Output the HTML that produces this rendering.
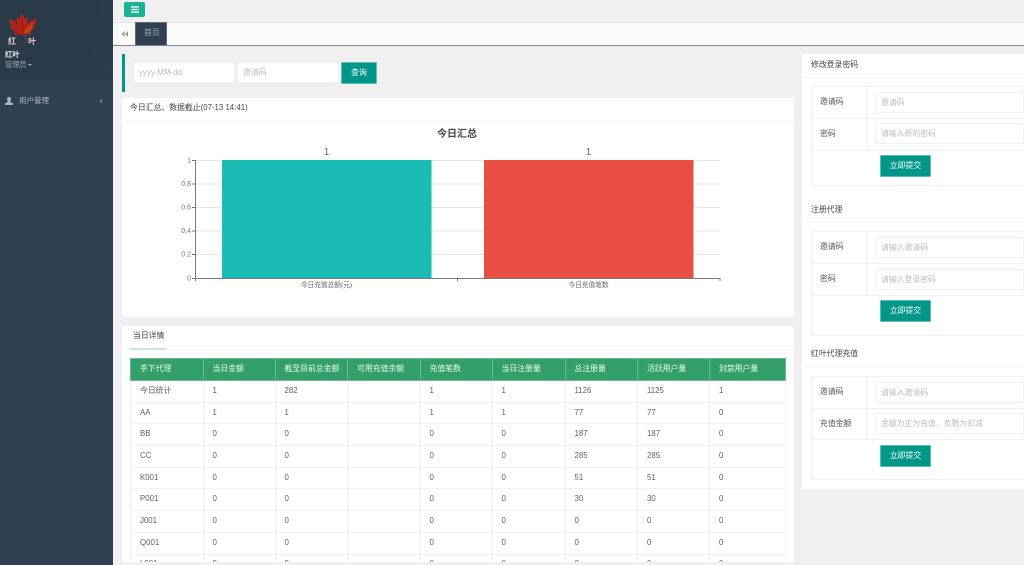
<!DOCTYPE html>
<html lang="zh"><head><meta charset="utf-8"><title>红叶</title>
<style>
*{box-sizing:border-box}
html,body{margin:0;padding:0;background:#f0f0f0}
body{width:1024px;height:565px;overflow:hidden;position:relative;font-family:"Liberation Sans","Noto Sans CJK SC",sans-serif;font-size:7.85px;color:#666}
#w{position:absolute;left:0;top:0;width:1024px;height:565px;overflow:hidden;filter:blur(.3px)}
.a{position:absolute}
.t{position:absolute;white-space:nowrap;line-height:12px}
.card{position:absolute;background:#fff}
.inp{position:absolute;background:#fff;border:1px solid #f1f1f1;color:#bbb;font-size:7.85px;line-height:19px;padding-left:5px;white-space:nowrap}
.btn{position:absolute;background:#009688;border:1px solid #5cbfb4;border-radius:1px;color:#fff;text-align:center;font-size:7.85px;white-space:nowrap}
.line{position:absolute;background:#f1f1f1}
table{position:absolute;left:130px;top:358px;width:655px;border-collapse:collapse;table-layout:fixed;font-size:7.85px}
th{background:#339f69;color:#eef8f2;font-weight:normal;text-align:left;height:22px;padding:0 0 2px 9px;border:1px solid #6cb98f}
td{height:21.7px;padding:0 0 2px 9px;border:1px solid #f1f1f1;color:#5f5f5f}
</style></head><body><div id="w">

<div class="a" style="left:0;top:0;width:113px;height:565px;background:#2f4050"></div>
<div class="a" style="left:0;top:0;width:113px;height:80px;background:linear-gradient(100deg,#2a3b4a 0%,#293a48 70%,#2b3c4b 100%)"></div>

<svg class="a" style="left:6px;top:12px" width="34" height="36" viewBox="0 0 34 36" font-family="'Liberation Sans','Noto Sans CJK SC',sans-serif">
<path d="M16 1L18.500 6.500L21.500 5.500L21 12.500L26 8L31 6.500L29 10.500L30 12L27 14.500L29 16L24 19.500L25 23L19 22L17 24L15 22L9 23.500L10 20L4 15.500L6 14L2.500 7.500L8 8.500L11.500 12.500L10.500 5.500L13.500 7Z" fill="#b8241a"/>
<path d="M19 15L27 10L25 19L18 22Z" fill="#c4401c"/>
<path d="M7 13L14 18L15 22L9 22Z" fill="#a81f18"/>
<path d="M16.500 6L17 22M17 17L24 12M17 17L9 12" stroke="#7a1c10" stroke-width=".6" fill="none"/>
<path d="M20 22L20 32" stroke="#5a4a3a" stroke-width="1"/>
<text x="2" y="32" font-size="8" font-weight="bold" fill="#e5c9c0">红</text>
<text x="22" y="32" font-size="8" font-weight="bold" fill="#e5c9c0">叶</text>
</svg>

<div class="t" style="left:5px;top:49px;color:#e4e8ec;font-weight:bold;font-size:7.3px">红叶</div>
<div class="t" style="left:5px;top:59px;color:#99a6b3;font-size:7.2px">管理员</div>
<div class="a" style="left:28px;top:64px;width:0;height:0;border:2px solid transparent;border-top-color:#a0acb6"></div>

<svg class="a" style="left:5px;top:97px" width="8" height="8" viewBox="0 0 8 8"><path d="M4 0C5.300 0 6 1 6 2.300C6 3.500 5.400 4.400 5 4.700L8 6.200V8H0V6.200L3 4.700C2.600 4.400 2 3.500 2 2.300C2 1 2.700 0 4 0Z" fill="#a7b1c2"/></svg>
<div class="t" style="left:19px;top:95px;color:#b3bccb;font-size:7.5px">用户管理</div>
<svg class="a" style="left:99px;top:98px" width="5" height="6" viewBox="0 0 5 6"><path d="M3 1.500L1.500 3L3 4.500" stroke="#a7b1c2" stroke-width=".8" fill="none"/></svg>

<div class="a" style="left:124px;top:2px;width:21px;height:15px;background:#1ab394;border-radius:2px"></div>
<svg class="a" style="left:131px;top:6px" width="8" height="7"><path d="M0 1H8M0 3.500H8M0 6H8" stroke="#fff" stroke-width="1.200"/></svg>

<div class="a" style="left:113px;top:22px;width:911px;height:24px;background:#fafafa;border-top:1px solid #e8e8e8;border-bottom:1px solid #7b8794"></div>
<svg class="a" style="left:121px;top:30px" width="8" height="8" viewBox="0 0 8 8"><path d="M3.500 1V7L0.500 4ZM7 1V7L4 4Z" fill="#9a9a9a"/></svg>
<div class="a" style="left:135px;top:22px;width:32px;height:23px;background:#2f4050;border:1px solid #5f6c78;border-bottom:0"></div>
<div class="t" style="left:144px;top:27px;color:#a7b1c2">首页</div>

<div class="a" style="left:122px;top:54px;width:3px;height:38px;background:#009688"></div>
<div class="inp" style="left:133px;top:62px;width:102px;height:21px">yyyy-MM-dd</div>
<div class="inp" style="left:237px;top:62px;width:102px;height:21px">邀请码</div>
<div class="btn" style="left:341px;top:62px;width:36px;height:22px;line-height:20px">查询</div>

<div class="card" style="left:122px;top:98px;width:672px;height:219px"></div>
<div class="line" style="left:122px;top:120px;width:672px;height:1px;background:#f5f5f5"></div>
<div class="t" style="left:130px;top:102px;color:#444">今日汇总、数据截止(07-13 14:41)</div>

<svg class="a" style="left:122px;top:120px" width="672" height="197" font-family="'Liberation Sans','Noto Sans CJK SC',sans-serif">
<g stroke="#e6e6e6" stroke-width="1"><path d="M73 40.500H598M73 64H598M73 87.500H598M73 111H598M73 134.500H598"/></g>
<rect x="100" y="40" width="209.500" height="118" fill="#1abcb3"/>
<rect x="362" y="40" width="209.500" height="118" fill="#e64f42"/>
<path d="M73.500 40V158.500H598M70 40.500H73M70 64H73M70 87.500H73M70 111H73M70 134.500H73M70 158.500H73M73.500 158V161M335.500 158V161M598 158V161" stroke="#777" stroke-width="1" fill="none"/>
<text x="335" y="17" text-anchor="middle" font-size="10" font-weight="bold" fill="#444">今日汇总</text>
<text x="204.500" y="35" text-anchor="middle" font-size="10" fill="#666">1</text>
<text x="466.500" y="35" text-anchor="middle" font-size="10" fill="#666">1</text>
<g font-size="7" fill="#777" text-anchor="end"><text x="69" y="42.500">1</text><text x="69" y="66">0.8</text><text x="69" y="89.500">0.6</text><text x="69" y="113">0.4</text><text x="69" y="136.500">0.2</text><text x="69" y="160.500">0</text></g>
<g font-size="6.700" fill="#666" text-anchor="middle"><text x="204.500" y="167">今日充值总额(元)</text><text x="466.500" y="167">今日充值笔数</text></g>
</svg>

<div class="card" style="left:122px;top:326px;width:672px;height:239px"></div>
<div class="line" style="left:122px;top:349px;width:672px;height:1px;background:#f5f5f5"></div>
<div class="a" style="left:130px;top:348px;width:36px;height:2px;background:#c5e8d3"></div>
<div class="t" style="left:133px;top:330px;color:#444">当日详情</div>

<table>
<colgroup><col style="width:72.500px"><col style="width:72px"><col style="width:72.500px"><col style="width:72.500px"><col style="width:72px"><col style="width:73px"><col style="width:72.500px"><col style="width:72px"><col style="width:76px"></colgroup>
<tr><th>手下代理</th><th>当日金额</th><th>截至目前总金额</th><th>可用充值余额</th><th>充值笔数</th><th>当日注册量</th><th>总注册量</th><th>活跃用户量</th><th>封禁用户量</th></tr>
<tr><td>今日统计</td><td>1</td><td>282</td><td></td><td>1</td><td>1</td><td>1126</td><td>1125</td><td>1</td></tr>
<tr><td>AA</td><td>1</td><td>1</td><td></td><td>1</td><td>1</td><td>77</td><td>77</td><td>0</td></tr>
<tr><td>BB</td><td>0</td><td>0</td><td></td><td>0</td><td>0</td><td>187</td><td>187</td><td>0</td></tr>
<tr><td>CC</td><td>0</td><td>0</td><td></td><td>0</td><td>0</td><td>285</td><td>285</td><td>0</td></tr>
<tr><td>K001</td><td>0</td><td>0</td><td></td><td>0</td><td>0</td><td>51</td><td>51</td><td>0</td></tr>
<tr><td>P001</td><td>0</td><td>0</td><td></td><td>0</td><td>0</td><td>30</td><td>30</td><td>0</td></tr>
<tr><td>J001</td><td>0</td><td>0</td><td></td><td>0</td><td>0</td><td>0</td><td>0</td><td>0</td></tr>
<tr><td>Q001</td><td>0</td><td>0</td><td></td><td>0</td><td>0</td><td>0</td><td>0</td><td>0</td></tr>
<tr><td>L001</td><td>0</td><td>0</td><td></td><td>0</td><td>0</td><td>0</td><td>0</td><td>0</td></tr>
</table>
<div class="a" style="left:113px;top:562px;width:681px;height:3px;background:#f0f0f0"></div>

<div class="card" style="left:802px;top:54px;width:222px;height:435px"></div>
<div class="line" style="left:802px;top:77px;width:222px;height:1px;background:#f5f5f5"></div>
<div class="line" style="left:802px;top:222px;width:222px;height:1px;background:#f5f5f5"></div>
<div class="line" style="left:802px;top:367px;width:222px;height:1px;background:#f5f5f5"></div>
<div class="t" style="left:811px;top:59px;color:#444">修改登录密码</div>
<div class="t" style="left:811px;top:204px;color:#444">注册代理</div>
<div class="t" style="left:811px;top:348px;color:#444">红叶代理充值</div>

<div class="a" style="left:811px;top:86px;width:213px;height:100px;border:1px solid #f1f1f1;border-right:0"></div>
<div class="line" style="left:812px;top:118px;width:212px;height:1px"></div>
<div class="line" style="left:812px;top:150px;width:212px;height:1px"></div>
<div class="line" style="left:866px;top:86px;width:1px;height:65px"></div>
<div class="t" style="left:820px;top:96px;color:#555">邀请码</div>
<div class="t" style="left:820px;top:128px;color:#555">密码</div>
<div class="inp" style="left:875px;top:92px;width:149px;height:21px">邀请码</div>
<div class="inp" style="left:875px;top:123px;width:149px;height:21px">请输入新的密码</div>
<div class="btn" style="left:880px;top:155px;width:51px;height:22px;line-height:20px">立即提交</div>

<div class="a" style="left:811px;top:231px;width:213px;height:105px;border:1px solid #f1f1f1;border-right:0"></div>
<div class="line" style="left:812px;top:263px;width:212px;height:1px"></div>
<div class="line" style="left:812px;top:295px;width:212px;height:1px"></div>
<div class="line" style="left:866px;top:231px;width:1px;height:65px"></div>
<div class="t" style="left:820px;top:241px;color:#555">邀请码</div>
<div class="t" style="left:820px;top:273px;color:#555">密码</div>
<div class="inp" style="left:875px;top:237px;width:149px;height:21px">请输入邀请码</div>
<div class="inp" style="left:875px;top:269px;width:149px;height:21px">请输入登录密码</div>
<div class="btn" style="left:880px;top:300px;width:51px;height:22px;line-height:20px">立即提交</div>

<div class="a" style="left:811px;top:376px;width:213px;height:104px;border:1px solid #f1f1f1;border-right:0"></div>
<div class="line" style="left:812px;top:408px;width:212px;height:1px"></div>
<div class="line" style="left:812px;top:439px;width:212px;height:1px"></div>
<div class="line" style="left:866px;top:376px;width:1px;height:64px"></div>
<div class="t" style="left:820px;top:386px;color:#555">邀请码</div>
<div class="t" style="left:820px;top:418px;color:#555">充值金额</div>
<div class="inp" style="left:875px;top:382px;width:149px;height:21px">请输入邀请码</div>
<div class="inp" style="left:875px;top:413px;width:149px;height:21px">金额为正为充值，负数为扣减</div>
<div class="btn" style="left:880px;top:445px;width:51px;height:22px;line-height:20px">立即提交</div>

</div></body></html>
